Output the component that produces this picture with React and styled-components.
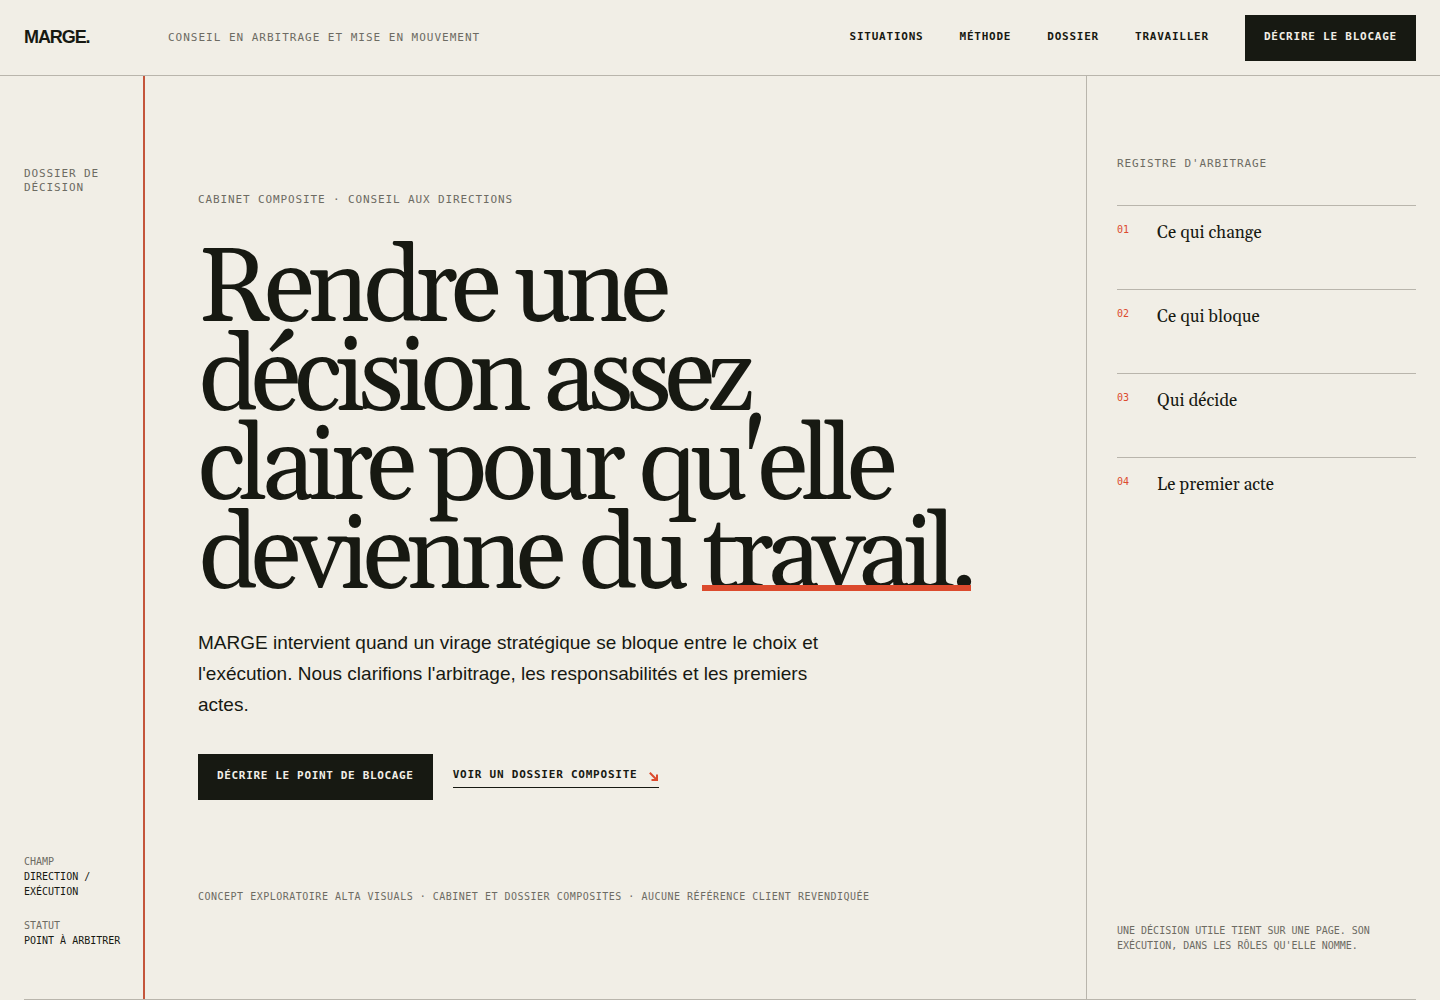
import styled, { createGlobalStyle } from "styled-components";

const ink = "#171912";
const paper = "#f1eee6";
const muted = "#6d6b63";
const rule = "#b9b5ac";
const accent = "#dc4a2d";

const sans = `"Liberation Sans", Arial, sans-serif`;
const serif = `Georgia, Gelasio, "Liberation Serif", serif`;
const mono = `"DejaVu Sans Mono", monospace`;

const GlobalStyle = createGlobalStyle`
  * {
    box-sizing: border-box;
  }
  body {
    margin: 0;
    background: ${paper};
    color: ${ink};
    font-family: ${sans};
  }
  a {
    color: inherit;
    text-decoration: none;
  }
`;

const Page = styled.div`
  min-height: 100vh;
  display: flex;
  flex-direction: column;
`;

const Header = styled.header`
  display: flex;
  align-items: center;
  height: 76px;
  padding: 0 24px;
  border-bottom: 1px solid ${rule};
`;

const Logo = styled.a`
  width: 144px;
  padding-bottom: 2px;
  font-size: 18px;
  line-height: 24px;
  font-weight: 700;
  letter-spacing: -0.06em;
`;

const Tagline = styled.p`
  margin: 0;
  font-family: ${mono};
  font-size: 11px;
  line-height: 14px;
  letter-spacing: 0.09em;
  text-transform: uppercase;
  color: ${muted};
`;

const Nav = styled.nav`
  display: flex;
  align-items: center;
  gap: 36px;
  margin-left: auto;
`;

const NavLink = styled.a`
  padding-bottom: 2px;
  font-family: ${mono};
  font-size: 11px;
  line-height: 14px;
  font-weight: 700;
  letter-spacing: 0.07em;
  text-transform: uppercase;
`;

const Button = styled.button`
  height: 46px;
  padding: 0 18px 2px;
  border: 1px solid ${ink};
  background: ${ink};
  color: ${paper};
  font-family: ${mono};
  font-size: 11px;
  line-height: 14px;
  font-weight: 700;
  letter-spacing: ${(props) => (props.$wide ? "0.07em" : "0.06em")};
  text-transform: uppercase;
  cursor: pointer;
`;

const Hero = styled.main`
  flex: 1;
  display: grid;
  grid-template-columns: 121px 1fr 330px;
  margin: 0 24px;
  border-bottom: 1px solid ${rule};
`;

const Rail = styled.aside`
  display: flex;
  flex-direction: column;
  justify-content: space-between;
  padding: 91px 16px 51px 0;
  border-right: 2px solid #c4553b;
`;

const Label = styled.p`
  margin: 0;
  font-family: ${mono};
  font-size: 11px;
  line-height: 14px;
  font-weight: 400;
  letter-spacing: 0.08em;
  text-transform: uppercase;
  color: ${muted};
`;

const Meta = styled.dl`
  display: flex;
  flex-direction: column;
  gap: 19px;
  margin: 0;
  font-family: ${mono};
  font-size: 10px;
  line-height: 15px;
  text-transform: uppercase;
`;

const MetaItem = styled.div`
  dt {
    color: ${muted};
  }
  dd {
    margin: 0 -8px 0 0;
  }
`;

const Content = styled.section`
  display: flex;
  flex-direction: column;
  justify-content: center;
  padding: 41px 53px 20px;
`;

const Title = styled.h1`
  max-width: 780px;
  margin: 40px 0 24px;
  font-family: ${serif};
  font-size: 104px;
  line-height: 89px;
  font-weight: 400;
  letter-spacing: -0.065em;
`;

const Marked = styled.span`
  position: relative;
  display: inline-block;
  &::after {
    content: "";
    position: absolute;
    left: 0;
    right: 0;
    bottom: 12px;
    height: 6px;
    background: ${accent};
  }
`;

const Lead = styled.p`
  max-width: 660px;
  margin: 0;
  font-size: 19px;
  line-height: 31px;
`;

const Actions = styled.div`
  display: flex;
  align-items: center;
  gap: 20px;
  margin-top: 34px;
`;

const TextLink = styled.a`
  display: flex;
  align-items: center;
  gap: 11px;
  padding: 2px 0 5px;
  border-bottom: 1px solid ${ink};
  font-family: ${mono};
  font-size: 11px;
  line-height: 14px;
  font-weight: 700;
  letter-spacing: 0.07em;
  text-transform: uppercase;
`;

const Arrow = styled.svg`
  width: 11px;
  height: 14px;
  fill: none;
  stroke: ${accent};
  stroke-width: 2;
`;

const Note = styled.p`
  margin: 90px 0 0;
  font-family: ${mono};
  font-size: 10px;
  line-height: 14px;
  letter-spacing: 0.05em;
  text-transform: uppercase;
  color: ${muted};
`;

const Register = styled.aside`
  display: flex;
  flex-direction: column;
  padding: 81px 0 46px 30px;
  border-left: 1px solid ${rule};
`;

const Steps = styled.ol`
  margin: 34px 0 0;
  padding: 0;
  list-style: none;
`;

const Step = styled.li`
  display: grid;
  grid-template-columns: 40px 1fr;
  height: 84px;
  padding-top: 15px;
  border-top: 1px solid ${rule};
`;

const StepNumber = styled.span`
  padding-top: 2px;
  font-family: ${mono};
  font-size: 10px;
  line-height: 14px;
  color: ${accent};
`;

const StepName = styled.span`
  font-family: ${serif};
  font-size: 17px;
  line-height: 24px;
`;

const RegisterNote = styled.p`
  margin: auto 0 0;
  max-width: 270px;
  font-family: ${mono};
  font-size: 10px;
  line-height: 15px;
  text-transform: uppercase;
  color: ${muted};
`;

const links = ["Situations", "Méthode", "Dossier", "Travailler"];
const steps = ["Ce qui change", "Ce qui bloque", "Qui décide", "Le premier acte"];

const App = () => {
  return (
    <Page>
      <GlobalStyle />
      <Header>
        <Logo href="#">MARGE.</Logo>
        <Tagline>Conseil en arbitrage et mise en mouvement</Tagline>
        <Nav>
          {links.map((link) => (
            <NavLink key={link} href={`#${link.toLowerCase()}`}>{link}</NavLink>
          ))}
          <Button $wide>Décrire le blocage</Button>
        </Nav>
      </Header>
      <Hero>
        <Rail>
          <Label>Dossier de décision</Label>
          <Meta>
            <MetaItem>
              <dt>Champ</dt>
              <dd>Direction / exécution</dd>
            </MetaItem>
            <MetaItem>
              <dt>Statut</dt>
              <dd>Point à arbitrer</dd>
            </MetaItem>
          </Meta>
        </Rail>
        <Content>
          <Label>Cabinet composite · Conseil aux directions</Label>
          <Title>
            Rendre une décision assez claire pour qu'elle devienne du <Marked>travail.</Marked>
          </Title>
          <Lead>
            MARGE intervient quand un virage stratégique se bloque entre le choix et
            l'exécution. Nous clarifions l'arbitrage, les responsabilités et les premiers
            actes.
          </Lead>
          <Actions>
            <Button>Décrire le point de blocage</Button>
            <TextLink href="#dossier">
              Voir un dossier composite
              <Arrow viewBox="0 0 11 14" aria-hidden="true">
                <path d="M1.8 4.8 L8.2 11.2 M9 6.5 V12 H3.5" />
              </Arrow>
            </TextLink>
          </Actions>
          <Note>
            Concept exploratoire Alta Visuals · Cabinet et dossier composites · Aucune
            référence client revendiquée
          </Note>
        </Content>
        <Register>
          <Label as="h2">Registre d'arbitrage</Label>
          <Steps>
            {steps.map((step, i) => (
              <Step key={step}>
                <StepNumber>{`0${i + 1}`}</StepNumber>
                <StepName>{step}</StepName>
              </Step>
            ))}
          </Steps>
          <RegisterNote>
            Une décision utile tient sur une page. Son exécution, dans les rôles qu'elle nomme.
          </RegisterNote>
        </Register>
      </Hero>
    </Page>
  );
};

export default App;
